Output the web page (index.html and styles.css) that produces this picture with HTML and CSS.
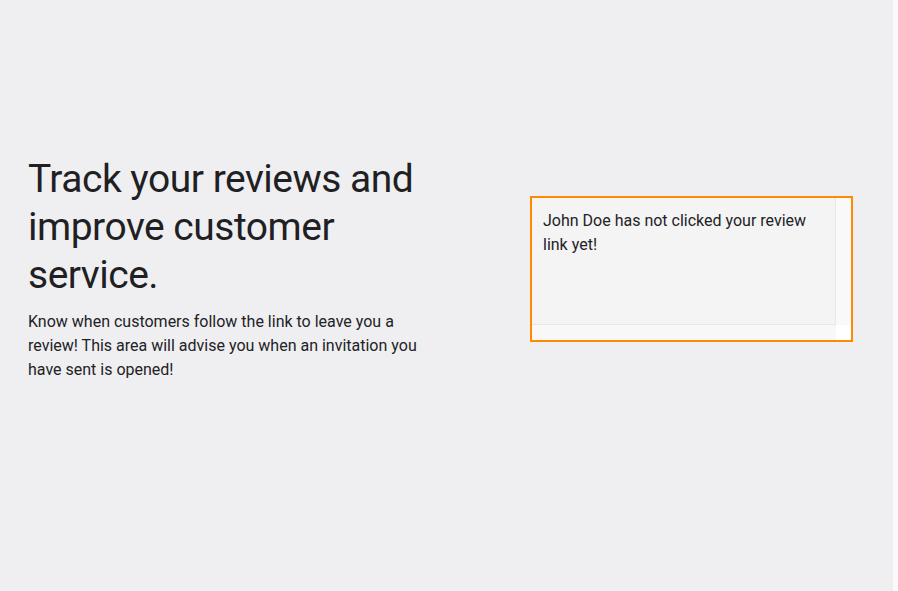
FILE: index.html
```html
<!DOCTYPE html>
<html>
<head>
<meta charset="utf-8">
<link rel="stylesheet" href="styles.css">
</head>
<body>
<div class="page">
  <main class="main">
    <section class="intro">
      <h1 class="title">Track your reviews and improve customer service.</h1>
      <p class="lead">Know when customers follow the link to leave you a review! This area will advise you when an invitation you have sent is opened!</p>
    </section>
    <section class="status">
      <div class="frame">
        <div class="row">
          <div class="card">John Doe has not clicked your review link yet!</div>
          <div class="vbar"></div>
        </div>
        <div class="row">
          <div class="hbar"></div>
          <div class="corner"></div>
        </div>
      </div>
    </section>
  </main>
  <div class="edge"></div>
</div>
</body>
</html>
```

FILE: styles.css
```css
html, body {
  margin: 0;
  padding: 0;
}
body {
  background: #efeff1;
  font-family: Roboto, "Liberation Sans", sans-serif;
  color: #222226;
}
.page {
  display: flex;
  width: 898px;
  height: 591px;
}
.main {
  width: 893px;
  display: flex;
  align-items: flex-start;
  padding-left: 28px;
  box-sizing: border-box;
}
.edge {
  width: 5px;
  background: #fbf9f9;
}
.intro {
  width: 400px;
  margin-top: 155px;
}
.title {
  margin: 0;
  font-family: Roboto, "Liberation Sans", sans-serif;
  font-weight: 400;
  font-size: 39px;
  line-height: 48px;
  color: #1f1f24;
  letter-spacing: -0.5px;
}
.lead {
  margin: 11px 0 0;
  font-size: 16px;
  line-height: 24px;
}
.status {
  margin-left: 102px;
  margin-top: 196px;
}
.frame {
  width: 319px;
  border: 2px solid #ff8a00;
  display: flex;
  flex-direction: column;
}
.row {
  display: flex;
}
.card {
  width: 304px;
  height: 127px;
  box-sizing: border-box;
  padding: 11px 11px;
  background: #f4f4f4;
  border-right: 1px solid #e8e8e8;
  border-bottom: 1px solid #e6e6e6;
  font-size: 16px;
  line-height: 24px;
}
.vbar {
  width: 15px;
  background: #f9f9f9;
}
.hbar {
  width: 304px;
  height: 15px;
  background: #f8f8f8;
}
.corner {
  width: 15px;
  height: 15px;
  background: #ffffff;
}
```
